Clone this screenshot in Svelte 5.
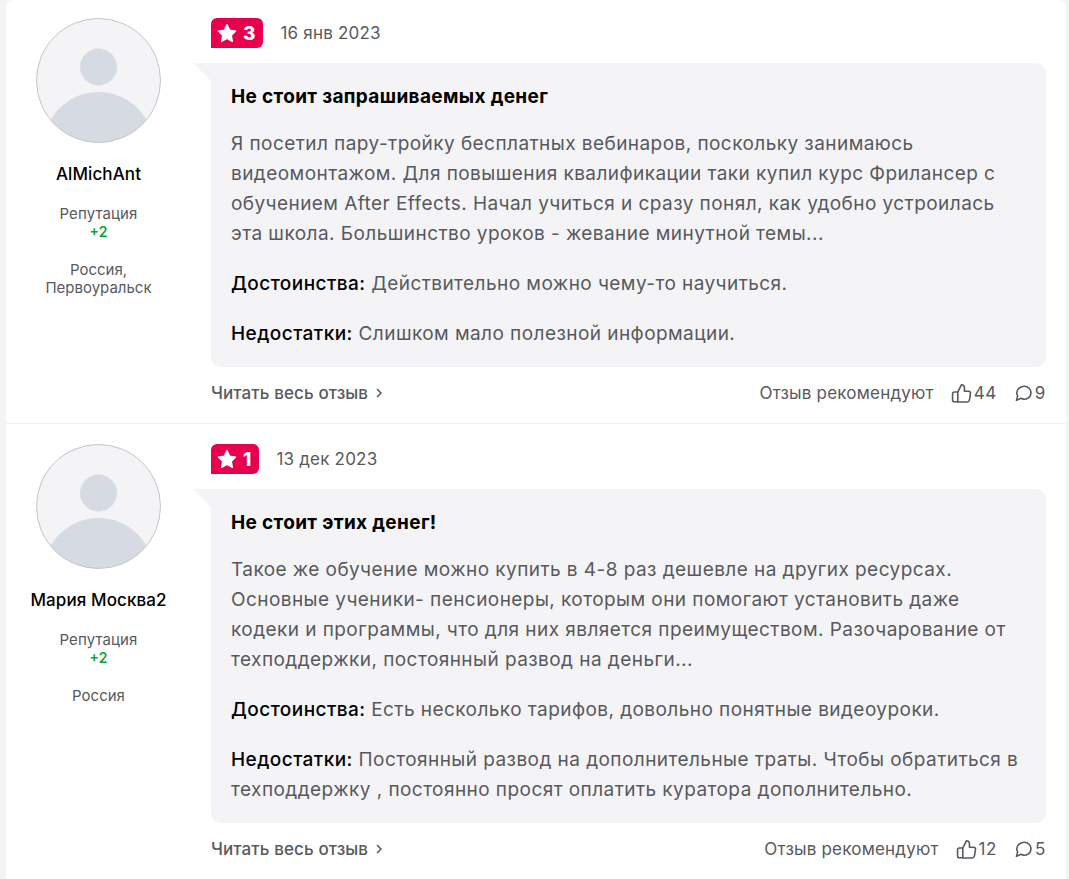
<script lang="ts">
  // отзывы: данные только для показа
  const reviews = [
    {
      name: 'AlMichAnt',
      rep: '+2',
      place: 'Россия, Первоуральск',
      rating: 3,
      date: '16 янв 2023',
      title: 'Не стоит запрашиваемых денег',
      text: 'Я посетил пару-тройку бесплатных вебинаров, поскольку занимаюсь видеомонтажом. Для повышения квалификации таки купил курс Фрилансер с обучением After Effects. Начал учиться и сразу понял, как удобно устроилась эта школа. Большинство уроков - жевание минутной темы...',
      pros: 'Действительно можно чему-то научиться.',
      cons: 'Слишком мало полезной информации.',
      likes: 44,
      comments: 9
    },
    {
      name: 'Мария Москва2',
      rep: '+2',
      place: 'Россия',
      rating: 1,
      date: '13 дек 2023',
      title: 'Не стоит этих денег!',
      text: 'Такое же обучение можно купить в 4-8 раз дешевле на других ресурсах. Основные ученики- пенсионеры, которым они помогают установить даже кодеки и программы, что для них является преимуществом. Разочарование от техподдержки, постоянный развод на деньги...',
      pros: 'Есть несколько тарифов, довольно понятные видеоуроки.',
      cons: 'Постоянный развод на дополнительные траты. Чтобы обратиться в техподдержку , постоянно просят оплатить куратора дополнительно.',
      likes: 12,
      comments: 5
    }
  ];
</script>

<div class="list">
  {#each reviews as r, i (i)}
    <article class="review">
      <aside class="author">
        <svg class="avatar" viewBox="0 0 125 125" width="125" height="125">
          <defs>
            <clipPath id="clip-{i}"><circle cx="62.5" cy="62.5" r="62" /></clipPath>
          </defs>
          <circle cx="62.5" cy="62.5" r="62" fill="#f4f4f6" />
          <g clip-path="url(#clip-{i})">
            <circle cx="62.5" cy="49" r="18.5" fill="#d5dae3" />
            <circle cx="62.5" cy="129" r="55" fill="#d5dae3" />
          </g>
          <circle cx="62.5" cy="62.5" r="62" fill="none" stroke="#c4c4c8" stroke-width="1" />
        </svg>
        <div class="name">{r.name}</div>
        <div class="rep">Репутация</div>
        <div class="rep-value">{r.rep}</div>
        <div class="place">{r.place}</div>
      </aside>

      <div class="body">
        <div class="head">
          <span class="badge">
            <svg viewBox="0 0 20 20" width="20" height="20">
              <path d="M10 1.5l2.7 5.6 6 .9-4.3 4.3 1 6.100L10 15.5l-5.4 2.900 1-6.100L1.300 8l6-.9z" fill="#fff" stroke="#fff" stroke-width="1.2" stroke-linejoin="round" />
            </svg>
            <b>{r.rating}</b>
          </span>
          <span class="date">{r.date}</span>
        </div>

        <div class="bubble">
          <h3>{r.title}</h3>
          <p>{r.text}</p>
          <p><strong>Достоинства:</strong> {r.pros}</p>
          <p><strong>Недостатки:</strong> {r.cons}</p>
        </div>

        <div class="foot">
          <span class="more">
            Читать весь отзыв
            <svg viewBox="0 0 8 10" width="8" height="10"><path d="M2 1l4 4-4 4" fill="none" stroke="#55585f" stroke-width="1.5" /></svg>
          </span>
          <span class="stats">
            <span class="rec">Отзыв рекомендуют</span>
            <span class="stat">
              <svg viewBox="0 0 20 20" width="21" height="21" fill="none" stroke="#55585f" stroke-width="1.5" stroke-linejoin="round">
                <path d="M6.5 8.500l3.400-6.800c1.600 0 2.900 1.200 2.900 2.900v3.200h3.900c1.200 0 2.100 1 1.900 2.200l-1.100 6.400c-.2 1-1 1.700-2 1.700H6.500z" />
                <path d="M6.500 8.500H3.300c-1 0-1.800.8-1.800 1.800v5.800c0 1 .8 1.800 1.800 1.800h3.200" />
              </svg>
              {r.likes}
            </span>
            <span class="stat">
              <svg viewBox="0 0 18 18" width="19" height="19" fill="none" stroke="#55585f" stroke-width="1.5" stroke-linejoin="round">
                <path d="M9.800 2.200c3.500 0 6.300 2.700 6.300 6.100 0 3.400-2.800 6.100-6.300 6.100-1.200 0-2.300-.3-3.200-.9l-4.300 2 1.200-4.200c-.6-.9-.9-1.900-.9-3 0-3.400 3.700-6.100 7.200-6.100z" />
              </svg>
              {r.comments}
            </span>
          </span>
        </div>
      </div>
    </article>
  {/each}
</div>

<style>
  :global(body) {
    background: #f4f4f6;
  }

  .list {
    margin: 0 3px 0 6px;
    background: #fff;
    border-radius: 8px 8px 0 0;
    font-family: Inter, 'Noto Sans', sans-serif;
    color: #58595e;
    height: 879px;
    overflow: hidden;
  }

  .review {
    display: flex;
    padding: 18px 20px 0 30px;
    height: 405px;
    box-sizing: content-box;
    border-bottom: 1px solid #f1f1f3;
  }

  .review:last-child {
    border-bottom: 0;
    padding-top: 20px;
  }

  .author {
    width: 125px;
    flex: none;
    margin-right: 50px;
    text-align: center;
    font-size: 15px;
    line-height: 18px;
  }

  .avatar {
    display: block;
  }

  .name {
    margin-top: 21px;
    font-size: 17px;
    line-height: 20px;
    letter-spacing: 0.1px;
    color: #000;
    font-weight: 500;
    margin-left: -20px;
    margin-right: -20px;
  }

  .rep {
    margin-top: 21px;
    letter-spacing: 0.1px;
  }

  .rep-value {
    color: #0ba52f;
    font-weight: 600;
    font-size: 14px;
  }

  .place {
    margin-top: 20px;
    margin-left: -10px;
    margin-right: -10px;
  }

  .body {
    flex: 1;
    min-width: 0;
  }

  .head {
    display: flex;
    align-items: center;
    gap: 17px;
    height: 30px;
  }

  .badge {
    display: flex;
    align-items: center;
    gap: 6px;
    height: 30px;
    padding: 0 8px 0 6px;
    box-sizing: border-box;
    background: #e8004f;
    border-radius: 6px 6px 6px 0;
    color: #fff;
    font-size: 19px;
  }

  .badge b {
    font-weight: 800;
  }

  .date {
    font-size: 17px;
    letter-spacing: 0.2px;
  }

  .bubble {
    position: relative;
    margin-top: 15px;
    padding: 19px 20px 18px;
    background: #f4f4f6;
    border-radius: 0 10px 10px 10px;
    font-size: 19px;
    letter-spacing: 0.44px;
    line-height: 30px;
  }

  .bubble::before {
    content: '';
    position: absolute;
    left: -18px;
    top: 0;
    border-top: 18px solid #f4f4f6;
    border-left: 18px solid transparent;
  }

  h3 {
    margin: 0 0 17px;
    color: #000;
    font-size: 19px;
    line-height: 30px;
    font-weight: 700;
    letter-spacing: 0.35px;
  }

  p {
    margin: 0 0 20px;
  }

  p:last-child {
    margin-bottom: 0;
  }

  strong {
    color: #000;
    font-weight: 500;
    letter-spacing: 0.44px;
  }

  .foot {
    display: flex;
    justify-content: space-between;
    align-items: center;
    margin-top: 14px;
    height: 24px;
    font-size: 17px;
    letter-spacing: 0.2px;
  }

  .more {
    display: flex;
    align-items: center;
    gap: 7px;
    font-weight: 500;
    letter-spacing: 0.1px;
  }

  .stats {
    display: flex;
    align-items: center;
    gap: 17px;
  }

  .stat {
    display: flex;
    align-items: center;
    gap: 2px;
    letter-spacing: 0.6px;
  }
</style>
